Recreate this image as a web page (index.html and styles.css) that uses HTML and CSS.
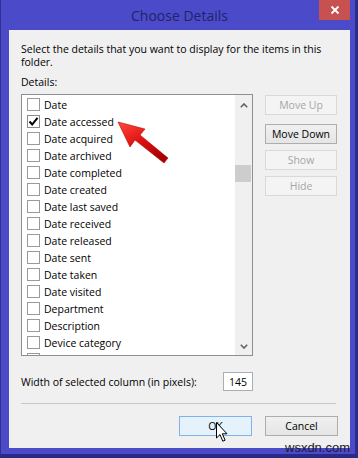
FILE: index.html
```html
<!DOCTYPE html>
<html lang="en">
<head>
    <meta charset="UTF-8">
    <title>Choose Details</title>
    <link rel="stylesheet" href="styles.css">
</head>
<body>
    <div class="window">
        <div class="titlebar">
            <span class="title">Choose Details</span>
            <span class="close">
                <svg width="10" height="10" viewBox="0 0 10 10"><path d="M1.5 1.5 L8.5 8.5 M8.5 1.5 L1.5 8.5" stroke="#fff" stroke-width="1.8"/></svg>
            </span>
        </div>

        <div class="client">
            <p class="intro">Select the details that you want to display for the items in this<br>folder.</p>
            <div class="label">Details:</div>

            <div class="picker">
                <div class="listbox">
                    <ul class="items">
                        <li><span class="check"></span>Date</li>
                        <li><span class="check checked"><svg width="11" height="11" viewBox="0 0 11 11"><path d="M1.5 5.5 L4.2 8.5 L9.5 1.8" fill="none" stroke="#000" stroke-width="2"/></svg></span>Date accessed</li>
                        <li><span class="check"></span>Date acquired</li>
                        <li><span class="check"></span>Date archived</li>
                        <li><span class="check"></span>Date completed</li>
                        <li><span class="check"></span>Date created</li>
                        <li><span class="check"></span>Date last saved</li>
                        <li><span class="check"></span>Date received</li>
                        <li><span class="check"></span>Date released</li>
                        <li><span class="check"></span>Date sent</li>
                        <li><span class="check"></span>Date taken</li>
                        <li><span class="check"></span>Date visited</li>
                        <li><span class="check"></span>Department</li>
                        <li><span class="check"></span>Description</li>
                        <li><span class="check"></span>Device category</li>
                        <li><span class="check"></span></li>
                    </ul>
                    <div class="scrollbar">
                        <span class="sb-btn up"><svg width="8" height="5" viewBox="0 0 8 5"><path d="M0.8 4.2 L4 1 L7.2 4.2" fill="none" stroke="#606060" stroke-width="1.6"/></svg></span>
                        <div class="sb-track"><div class="sb-thumb"></div></div>
                        <span class="sb-btn down"><svg width="8" height="5" viewBox="0 0 8 5"><path d="M0.8 0.8 L4 4 L7.2 0.8" fill="none" stroke="#606060" stroke-width="1.6"/></svg></span>
                    </div>
                </div>

                <div class="side-buttons">
                    <button class="btn" disabled>Move Up</button>
                    <button class="btn">Move Down</button>
                    <button class="btn" disabled>Show</button>
                    <button class="btn" disabled>Hide</button>
                </div>
            </div>

            <div class="width-row">
                <label for="colWidth">Width of selected column (in pixels):</label>
                <input type="text" id="colWidth" value="145">
            </div>

            <div class="sep"></div>

            <div class="actions">
                <button class="btn default">OK</button>
                <button class="btn">Cancel</button>
            </div>
        </div>

        <!-- annotation arrow drawn over the list -->
        <svg class="red-arrow" width="66" height="60" viewBox="0 0 66 60">
            <defs>
                <linearGradient id="redShade" x1="0" y1="0" x2="0.6" y2="1">
                    <stop offset="0" stop-color="#ff4a3a"/>
                    <stop offset="0.55" stop-color="#e01010"/>
                    <stop offset="1" stop-color="#a80000"/>
                </linearGradient>
            </defs>
            <polygon points="8,10 35,17 30,23 58,46 54,51 25,28 20,35" fill="url(#redShade)" stroke="#b00808" stroke-width="0.6"/>
        </svg>

        <svg class="cursor" width="13" height="21" viewBox="0 0 13 21">
            <path d="M0.5 0.5 L0.5 16 L4 12.6 L6.8 19.2 L9.1 18.2 L6.3 11.8 L11 11.8 Z" fill="#fff" stroke="#000" stroke-width="1"/>
        </svg>

        <span class="watermark">wsxdn.com</span>
    </div>
</body>
</html>
```

FILE: styles.css
```css
body {
    margin: 0;
    font-family: "Open Sans", "Noto Sans", sans-serif;
    font-size: 10.5px;
    color: #000;
}
.window {
    position: relative;
    width: 358px;
    height: 458px;
    box-sizing: border-box;
    background: #4b4bc9;
    border-left: 1px solid #30308e;
    border-right: 3px solid #2c2c8a;
    border-bottom: 4px solid #2a2a86;
    padding: 0 5px 6px 8px;
    display: flex;
    flex-direction: column;
}
.titlebar {
    position: relative;
    height: 30px;
    display: flex;
    align-items: center;
    justify-content: center;
}
.title {
    font-size: 14px;
    color: #22226a;
}
.close {
    position: absolute;
    top: 0;
    right: 0;
    width: 31px;
    height: 20px;
    background: #c75050;
    display: flex;
    align-items: center;
    justify-content: center;
}
.client {
    flex: 1;
    background: #f0f0f0;
    padding: 13px 12px 12px;
    display: flex;
    flex-direction: column;
}
.intro {
    margin: 0;
    line-height: 13px;
}
.label {
    margin-top: 7px;
    line-height: 13px;
}
.picker {
    margin-top: 5px;
    display: flex;
    gap: 12px;
}
.listbox {
    width: 232px;
    height: 262px;
    box-sizing: border-box;
    border: 1px solid #8c8f96;
    background: #fff;
    display: flex;
    overflow: hidden;
}
.items {
    flex: 1;
    list-style: none;
    margin: 0;
    padding: 1px 0 0;
    overflow: hidden;
}
.items li {
    height: 17px;
    display: flex;
    align-items: center;
    padding-left: 5px;
    white-space: nowrap;
}
.check {
    width: 13px;
    height: 13px;
    box-sizing: border-box;
    border: 1px solid #9a9a9a;
    background: #fff;
    margin-right: 4px;
    display: flex;
    align-items: center;
    justify-content: center;
}
.check.checked {
    border-color: #8a8a8a;
}
.scrollbar {
    width: 17px;
    background: #f0f0f0;
    display: flex;
    flex-direction: column;
}
.sb-btn {
    display: flex;
    align-items: center;
    justify-content: center;
}
.sb-btn.up {
    height: 21px;
}
.sb-btn.down {
    height: 18px;
}
.sb-track {
    flex: 1;
}
.sb-thumb {
    margin: 49px 1px 0 0;
    height: 17px;
    background: #cdcdcd;
}
.side-buttons {
    display: flex;
    flex-direction: column;
    padding-top: 1px;
    gap: 6px;
}
.btn {
    width: 72px;
    height: 20px;
    box-sizing: border-box;
    padding: 0;
    font-family: inherit;
    font-size: 10.5px;
    color: #000;
    border: 1px solid #adadad;
    background: linear-gradient(#f0f0f0, #e5e5e5);
    cursor: pointer;
}
.btn:disabled {
    color: #a6a6a6;
    border-color: #d9d9d9;
    background: #f4f4f4;
}
.side-buttons .btn:nth-child(2) {
    margin-top: 3px;
}
.width-row {
    margin-top: 16px;
    display: flex;
    align-items: center;
}
.width-row label {
    width: 202px;
}
.width-row input {
    width: 30px;
    height: 19px;
    box-sizing: border-box;
    border: 1px solid #abadb3;
    padding: 0;
    font-family: inherit;
    font-size: 10.5px;
    text-align: center;
    background: #fff;
}
.sep {
    margin-top: 12px;
    margin-right: 2px;
    height: 1px;
    background: #c8c8c8;
}
.actions {
    margin-top: 12px;
    display: flex;
    justify-content: flex-end;
    gap: 13px;
}
.actions .btn {
    width: 73px;
}
.btn.default {
    border-color: #7eb4ea;
    background: #e5f1fb;
}
.red-arrow {
    position: absolute;
    left: 109px;
    top: 112px;
}
.cursor {
    position: absolute;
    left: 215px;
    top: 422px;
}
.watermark {
    position: absolute;
    left: 284px;
    top: 440px;
    font-family: "Liberation Sans", Arial, sans-serif;
    font-size: 13px;
    color: #1c1c2c;
    line-height: 15px;
}
```
